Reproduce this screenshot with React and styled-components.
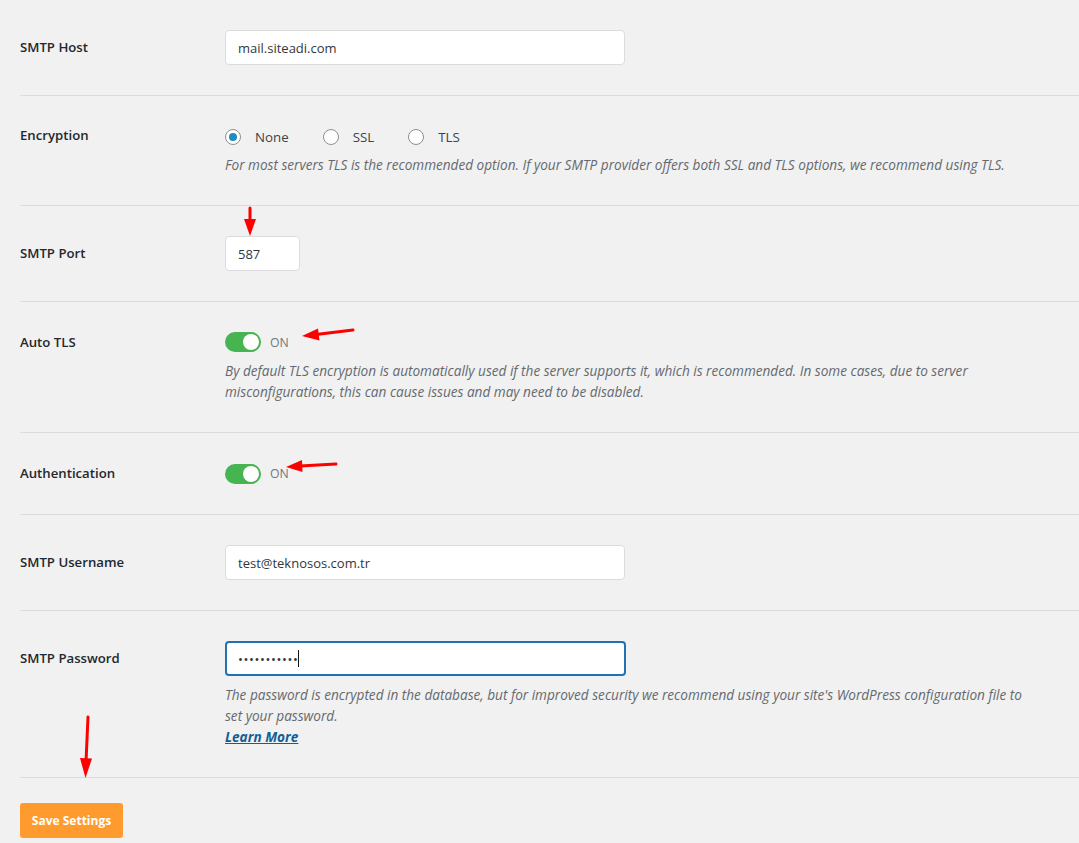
import React from "react";
import styled, { createGlobalStyle } from "styled-components";

const Global = createGlobalStyle`
  html, body { margin: 0; padding: 0; background: #f1f1f1; }
  body { font-family: "Open Sans", "Noto Sans", sans-serif; color: #23282d; }
  * { box-sizing: border-box; }
`;

const Page = styled.div`
  position: relative;
  width: 1079px;
  height: 843px;
  overflow: hidden;
  padding-left: 20px;
`;

const Row = styled.div`
  display: grid;
  grid-template-columns: 205px 1fr;
  padding: 30px 38px 30px 0;
  border-bottom: 1px solid #dcdcde;
`;

const Label = styled.div`
  font-size: 13.2px;
  font-weight: 600;
  color: #23282d;
  line-height: ${(p) => p.$h}px;
  height: ${(p) => p.$h}px;
`;

const Field = styled.div`
  display: flex;
  flex-direction: column;
`;

const TextInput = styled.div`
  width: ${(p) => p.$w}px;
  height: 35px;
  background: #fff;
  border: ${(p) => (p.$focus ? "2px solid #2271b1" : "1px solid #dcdcde")};
  border-radius: 4px;
  padding: 0 ${(p) => (p.$focus ? 11 : 12)}px;
  display: flex;
  align-items: center;
  font-size: 13px;
  color: #32373c;
`;

const Caret = styled.span`
  display: inline-block;
  width: 1px;
  height: 17px;
  background: #111;
  margin-left: 0;
`;

const Dots = styled.span`
  letter-spacing: 0.6px;
  font-size: 13px;
  color: #32373c;
`;

const Radios = styled.div`
  display: flex;
  align-items: center;
  height: 22px;
  gap: 34px;
`;

const RadioOpt = styled.label`
  display: flex;
  align-items: center;
  gap: 14px;
  font-size: 13.3px;
  color: #3c434a;
`;

const RadioCircle = styled.span`
  width: 16px;
  height: 16px;
  border-radius: 50%;
  border: 1px solid #8c8f94;
  background: #fff;
  display: flex;
  align-items: center;
  justify-content: center;
  &::after {
    content: "";
    width: 8px;
    height: 8px;
    border-radius: 50%;
    background: ${(p) => (p.$on ? "#1e8cbe" : "transparent")};
  }
`;

const Desc = styled.p`
  margin: ${(p) => p.$mt ?? 8}px 0 0;
  font-size: 13.6px;
  font-style: italic;
  line-height: 21px;
  color: #646970;
`;

const LearnMore = styled.a`
  display: block;
  font-size: 13.6px;
  font-style: italic;
  font-weight: 700;
  line-height: 21px;
  color: #135e96;
  text-decoration: underline;
`;

const ToggleRow = styled.div`
  display: flex;
  align-items: center;
  height: ${(p) => p.$h || 20}px;
  gap: 9px;
`;

const Toggle = styled.span`
  position: relative;
  width: 36px;
  height: 20px;
  border-radius: 10px;
  background: #46b450;
  &::after {
    content: "";
    position: absolute;
    top: 2px;
    right: 2px;
    width: 16px;
    height: 16px;
    border-radius: 50%;
    background: #fff;
  }
`;

const OnText = styled.span`
  font-size: 12.3px;
  color: #72777c;
`;

const Footer = styled.div`
  padding-top: 25px;
`;

const SaveButton = styled.button`
  width: 103px;
  height: 35px;
  border: none;
  border-radius: 3px;
  background: #ff9b2e;
  color: #fff;
  font-family: "Open Sans", "Noto Sans", sans-serif;
  font-size: 12px;
  font-weight: 700;
  padding: 0;
`;

const Arrows = styled.svg`
  position: absolute;
  left: 0;
  top: 0;
  pointer-events: none;
`;

export default function App() {
  return (
    <>
      <Global />
      <Page>
        <Row>
          <Label $h={35}>SMTP Host</Label>
          <Field>
            <TextInput $w={400}>mail.siteadi.com</TextInput>
          </Field>
        </Row>
        <Row>
          <Label $h={18}>Encryption</Label>
          <Field>
            <Radios>
              <RadioOpt><RadioCircle $on />None</RadioOpt>
              <RadioOpt><RadioCircle />SSL</RadioOpt>
              <RadioOpt><RadioCircle />TLS</RadioOpt>
            </Radios>
            <Desc $mt={6}>
              For most servers TLS is the recommended option. If your SMTP provider offers both SSL and TLS options, we recommend using TLS.
            </Desc>
          </Field>
        </Row>
        <Row>
          <Label $h={35}>SMTP Port</Label>
          <Field>
            <TextInput $w={75}>587</TextInput>
          </Field>
        </Row>
        <Row>
          <Label $h={20}>Auto TLS</Label>
          <Field>
            <ToggleRow><Toggle /><OnText>ON</OnText></ToggleRow>
            <Desc>
              By default TLS encryption is automatically used if the server supports it, which is recommended. In some cases, due to server misconfigurations, this can cause issues and may need to be disabled.
            </Desc>
          </Field>
        </Row>
        <Row>
          <Label $h={20}>Authentication</Label>
          <Field>
            <ToggleRow $h={21}><Toggle /><OnText>ON</OnText></ToggleRow>
          </Field>
        </Row>
        <Row>
          <Label $h={35}>SMTP Username</Label>
          <Field>
            <TextInput $w={400}>test@teknosos.com.tr</TextInput>
          </Field>
        </Row>
        <Row>
          <Label $h={35}>SMTP Password</Label>
          <Field>
            <TextInput $w={401} $focus><Dots>•••••••••••</Dots><Caret /></TextInput>
            <Desc>
              The password is encrypted in the database, but for improved security we recommend using your site's WordPress configuration file to set your password.
            </Desc>
            <LearnMore href="#">Learn More</LearnMore>
          </Field>
        </Row>
        <Footer>
          <SaveButton>Save Settings</SaveButton>
        </Footer>
        <Arrows width="1079" height="843" viewBox="0 0 1079 843">
          <g fill="#ff0000" stroke="#ff0000" strokeLinecap="round">
            <line x1="250" y1="208" x2="250" y2="222" strokeWidth="3" fill="none" />
            <polygon points="244,219 256,219 250,236" stroke="none" />
            <line x1="353" y1="330" x2="316" y2="334.5" strokeWidth="3" fill="none" />
            <polygon points="318,328.5 319.5,340.5 302,336" stroke="none" />
            <line x1="336" y1="464" x2="300" y2="466" strokeWidth="3" fill="none" />
            <polygon points="302,460 302.5,472 286,467" stroke="none" />
            <line x1="88" y1="717" x2="86" y2="762" strokeWidth="3" fill="none" />
            <polygon points="80,758 92,758.5 85.5,778" stroke="none" />
          </g>
        </Arrows>
      </Page>
    </>
  );
}
